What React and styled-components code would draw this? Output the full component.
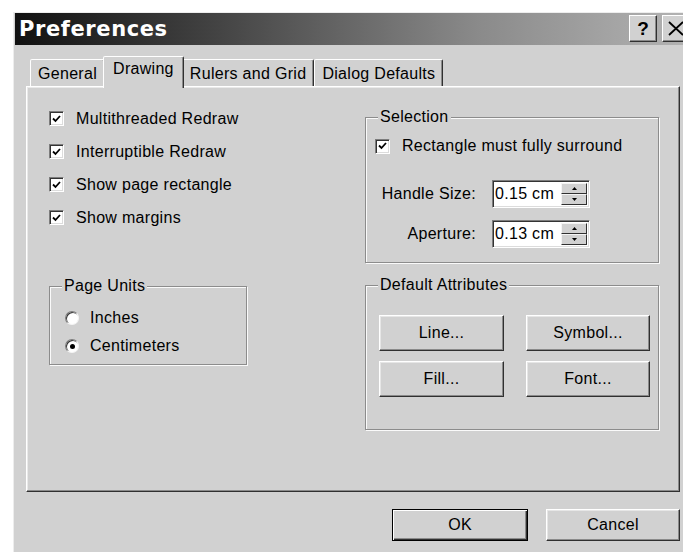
import React from 'react';
import styled, { createGlobalStyle } from 'styled-components';

const GlobalStyle = createGlobalStyle`
  html, body {
    margin: 0;
    padding: 0;
    background: #fff;
    overflow: hidden;
  }
  body {
    font-family: "Liberation Sans", Arial, sans-serif;
  }
`;

const FACE = '#d1d1d1';

const Window = styled.div`
  margin: 12px 0 0 13px;
  width: 682px;
  height: 540px;
  box-sizing: border-box;
  padding: 0 0 0 1px;
  border-left: 1px solid #ededed;
  border-top: 1px solid #ededed;
  background: ${FACE};
  color: #000;
  font-size: 16px;
  line-height: 18px;
  letter-spacing: 0.3px;
`;

const TitleBar = styled.div`
  height: 32px;
  display: flex;
  align-items: center;
  gap: 5px;
  padding: 0 5px 0 4px;
  background: linear-gradient(to right, #111 0%, #444 30%, #8a8a8a 68%, #b4b4b4 100%);
`;

const Title = styled.h1`
  flex: 1;
  margin: 0;
  color: #fff;
  font: bold 21px "DejaVu Sans", sans-serif;
  letter-spacing: 0.6px;
`;

const CaptionButton = styled.button`
  width: 28px;
  height: 27px;
  padding: 0;
  margin-top: -1px;
  display: flex;
  align-items: center;
  justify-content: center;
  background: ${FACE};
  border: 1px solid;
  border-color: #fff #303030 #303030 #fff;
  box-shadow: inset -1px -1px 0 #888;
  font: bold 19px "Liberation Sans", Arial, sans-serif;
  color: #000;
`;

const Body = styled.div`
  padding: 11px 0 0 11px;
`;

const TabRow = styled.div`
  display: flex;
  align-items: flex-end;
  height: 30px;
  padding-left: 4px;
`;

const Tab = styled.div`
  position: relative;
  box-sizing: border-box;
  height: ${p => (p.$active ? 32 : 27)}px;
  margin: 0 ${p => (p.$active ? -2 : 0)}px ${p => (p.$active ? -2 : 0)}px;
  padding: ${p => (p.$active ? '3px 9px 0' : '5px 7px 0')};
  z-index: ${p => (p.$active ? 1 : 0)};
  background: ${FACE};
  border: 1px solid;
  border-bottom: none;
  border-color: #fff #303030 transparent #fff;
  border-radius: 2px 2px 0 0;
  box-shadow: inset -1px 0 0 #8a8a8a;
  white-space: nowrap;
`;

const Panel = styled.div`
  box-sizing: border-box;
  width: 654px;
  height: 406px;
  padding: 15px 0 0 22px;
  display: grid;
  grid-template-columns: 316px 295px;
  align-items: start;
  border: 1px solid;
  border-color: #fff #303030 #303030 #fff;
  box-shadow: inset -1px -1px 0 #8a8a8a, inset 1px 1px 0 #e9e9e9;
`;

const Column = styled.div`
  display: flex;
  flex-direction: column;
  padding-top: ${p => p.$top || 0}px;
`;

const CheckRow = styled.label`
  display: flex;
  align-items: center;
  gap: ${p => p.$gap || 12}px;
  height: ${p => p.$h || 33}px;
  white-space: nowrap;
`;

const Box = styled.span`
  box-sizing: border-box;
  width: 15px;
  height: 15px;
  flex: none;
  display: flex;
  align-items: center;
  justify-content: center;
  background: #fff;
  border: 1px solid;
  border-color: #7c7c7c #fff #fff #7c7c7c;
  box-shadow: inset 1px 1px 0 #333, inset -1px -1px 0 #dcdcdc;
`;

const Radio = styled.span`
  box-sizing: border-box;
  width: 14px;
  height: 14px;
  flex: none;
  display: flex;
  align-items: center;
  justify-content: center;
  border-radius: 50%;
  background: #fff;
  border: 1px solid;
  border-color: #7c7c7c #f4f4f4 #f4f4f4 #7c7c7c;
  box-shadow: inset 1px 1px 0 #333;

  &::after {
    content: "";
    width: 5px;
    height: 5px;
    border-radius: 50%;
    background: ${p => (p.$on ? '#000' : 'transparent')};
  }
`;

const Group = styled.fieldset`
  margin: ${p => p.$mt || 0}px 0 0;
  padding: 0;
  width: ${p => p.$w}px;
  box-sizing: border-box;
  min-width: 0;
  border: 1px solid #8c8c8c;
  box-shadow: 1px 1px 0 #fafafa, inset 1px 1px 0 #fafafa;
`;

const Legend = styled.legend`
  margin-left: 12px;
  padding: 0 2px;
  line-height: 18px;
  background: ${FACE};
`;

const GroupBody = styled.div`
  padding: ${p => p.$pad};
`;

const FieldGrid = styled.div`
  display: grid;
  grid-template-columns: 101px 98px;
  column-gap: 16px;
  row-gap: 12px;
  align-items: center;
  margin-top: 21px;
`;

const FieldLabel = styled.span`
  text-align: right;
  white-space: nowrap;
`;

const Spin = styled.div`
  display: flex;
  box-sizing: border-box;
  height: 28px;
  background: #fff;
  border: 1px solid;
  border-color: #7c7c7c #fff #fff #7c7c7c;
  box-shadow: inset 1px 1px 0 #333, inset -1px -1px 0 #dcdcdc;
  padding: 2px;
`;

const SpinValue = styled.span`
  flex: 1;
  line-height: 22px;
  white-space: nowrap;
`;

const SpinArrows = styled.div`
  width: 26px;
  display: flex;
  flex-direction: column;
`;

const SpinHalf = styled.span`
  flex: 1;
  display: flex;
  align-items: center;
  justify-content: center;
  box-sizing: border-box;
  background: ${FACE};
  border: 1px solid;
  border-color: #f4f4f4 #303030 #303030 #f4f4f4;
`;

const AttrGrid = styled.div`
  display: grid;
  grid-template-columns: 125px 124px;
  grid-auto-rows: 36px;
  column-gap: 22px;
  row-gap: 10px;
`;

const PushButton = styled.button`
  box-sizing: border-box;
  width: ${p => p.$w || 'auto'};
  height: ${p => p.$h || 36}px;
  padding: 0;
  background: ${FACE};
  color: #000;
  font: 16px "Liberation Sans", Arial, sans-serif;
  letter-spacing: 0.3px;
  border: 1px solid;
  border-color: ${p => (p.$default ? '#000' : '#fff #303030 #303030 #fff')};
  box-shadow: ${p =>
    p.$default
      ? 'inset 1px 1px 0 #fff, inset -1px -1px 0 #303030, inset -2px -2px 0 #8a8a8a'
      : 'inset -1px -1px 0 #8a8a8a, inset 1px 1px 0 #e6e6e6'};
`;

const Footer = styled.div`
  width: 654px;
  display: flex;
  justify-content: flex-end;
  gap: 18px;
  margin-top: 17px;
`;

const Check = () => (
  <Box>
    <svg width="9" height="8" viewBox="0 0 9 8">
      <path d="M1 3.5 L3.5 6 L8 1" fill="none" stroke="#000" strokeWidth="1.8" />
    </svg>
  </Box>
);

const Arrow = ({ up }) => (
  <svg width="5" height="3" viewBox="0 0 5 3">
    <path d={up ? 'M0 3 L2.5 0 L5 3 Z' : 'M0 0 L2.5 3 L5 0 Z'} fill="#000" />
  </svg>
);

const SpinBox = ({ value }) => (
  <Spin>
    <SpinValue>{value}</SpinValue>
    <SpinArrows>
      <SpinHalf><Arrow up /></SpinHalf>
      <SpinHalf><Arrow /></SpinHalf>
    </SpinArrows>
  </Spin>
);

const options = [
  'Multithreaded Redraw',
  'Interruptible Redraw',
  'Show page rectangle',
  'Show margins',
];

const tabs = ['General', 'Drawing', 'Rulers and Grid', 'Dialog Defaults'];

export default function App() {
  return (
    <>
      <GlobalStyle />
      <Window>
        <TitleBar>
          <Title>Preferences</Title>
          <CaptionButton>?</CaptionButton>
          <CaptionButton>
            <svg width="16" height="15" viewBox="0 0 16 15">
              <path d="M1 1 L15 14 M15 1 L1 14" stroke="#000" strokeWidth="1.8" />
            </svg>
          </CaptionButton>
        </TitleBar>

        <Body>
          <TabRow>
            {tabs.map(t => (
              <Tab key={t} $active={t === 'Drawing'}>{t}</Tab>
            ))}
          </TabRow>

          <Panel>
            <Column>
              {options.map(o => (
                <CheckRow key={o}>
                  <Check />
                  {o}
                </CheckRow>
              ))}

              <Group $w={198} $mt={43}>
                <Legend>Page Units</Legend>
                <GroupBody $pad="9px 0 4px 15px">
                  <CheckRow $h={28} $gap={11}>
                    <Radio />
                    Inches
                  </CheckRow>
                  <CheckRow $h={28} $gap={11}>
                    <Radio $on />
                    Centimeters
                  </CheckRow>
                </GroupBody>
              </Group>
            </Column>

            <Column $top={6}>
              <Group $w={294}>
                <Legend>Selection</Legend>
                <GroupBody $pad="7px 0 14px 9px">
                  <CheckRow $h={26}>
                    <Check />
                    Rectangle must fully surround
                  </CheckRow>
                  <FieldGrid>
                    <FieldLabel>Handle Size:</FieldLabel>
                    <SpinBox value="0.15 cm" />
                    <FieldLabel>Aperture:</FieldLabel>
                    <SpinBox value="0.13 cm" />
                  </FieldGrid>
                </GroupBody>
              </Group>

              <Group $w={294} $mt={13}>
                <Legend>Default Attributes</Legend>
                <GroupBody $pad="21px 0 32px 13px">
                  <AttrGrid>
                    <PushButton>Line...</PushButton>
                    <PushButton>Symbol...</PushButton>
                    <PushButton>Fill...</PushButton>
                    <PushButton>Font...</PushButton>
                  </AttrGrid>
                </GroupBody>
              </Group>
            </Column>
          </Panel>

          <Footer>
            <PushButton $default $w="136px" $h={32}>OK</PushButton>
            <PushButton $w="134px" $h={32}>Cancel</PushButton>
          </Footer>
        </Body>
      </Window>
    </>
  );
}
